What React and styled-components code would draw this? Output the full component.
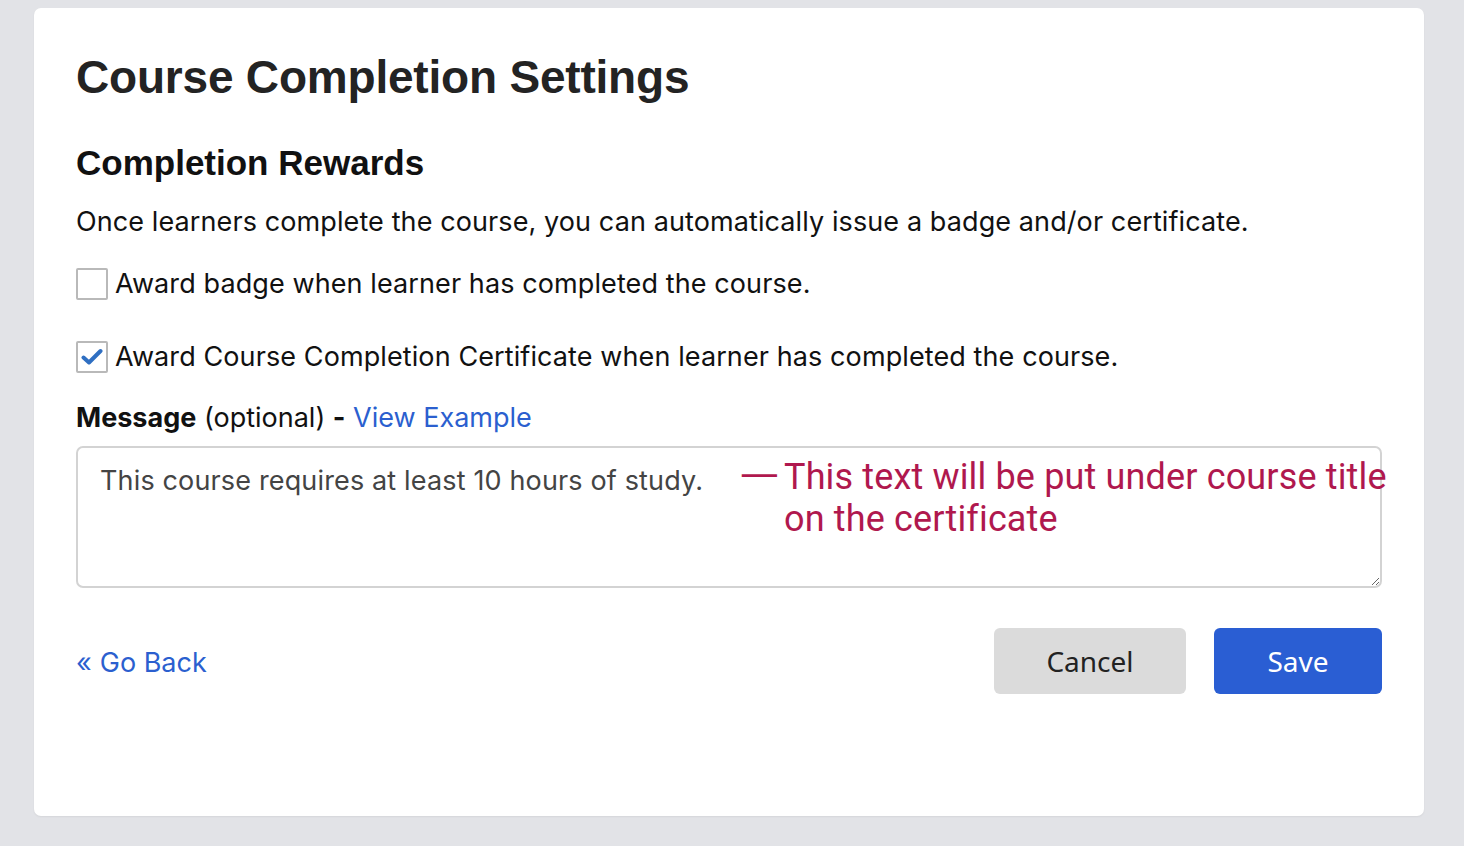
import React from "react";
import styled, { createGlobalStyle } from "styled-components";

const Global = createGlobalStyle`
  html, body { margin: 0; padding: 0; }
  body {
    background: #e2e3e7;
    font-family: Inter, "Noto Sans", sans-serif;
    color: #1d1d1f;
  }
`;

const Page = styled.div`
  padding: 8px 40px 30px 34px;
`;

const Card = styled.section`
  background: #ffffff;
  border-radius: 7px;
  box-shadow: 0 1px 2px rgba(0, 0, 0, 0.06);
  min-height: 808px;
  box-sizing: border-box;
  padding: 41px 42px 40px 42px;
  display: flex;
  flex-direction: column;
`;

const Title = styled.h1`
  margin: 0;
  font-family: "Liberation Sans", Arial, sans-serif;
  font-weight: 700;
  font-size: 46px;
  line-height: 56px;
  color: #232323;
  letter-spacing: -0.2px;
`;

const SectionTitle = styled.h2`
  margin: 37px 0 0 0;
  font-family: "Liberation Sans", Arial, sans-serif;
  font-weight: 700;
  font-size: 35px;
  line-height: 42px;
  color: #111;
`;

const Intro = styled.p`
  margin: 22px 0 0 0;
  font-size: 27px;
  letter-spacing: 0.1px;
  line-height: 32px;
  color: #111;
`;

const CheckRow = styled.label`
  display: flex;
  align-items: center;
  gap: 7px;
  margin-top: ${(p) => p.$gap}px;
  font-size: 27px;
  letter-spacing: 0.1px;
  line-height: 32px;
  color: #111;
`;

const Box = styled.span`
  width: 32px;
  height: 32px;
  box-sizing: border-box;
  border: 2px solid #b9b9b9;
  border-radius: 2px;
  background: #fff;
  display: flex;
  align-items: center;
  justify-content: center;
  flex: none;
`;

const Label = styled.div`
  margin-top: 29px;
  font-size: 27px;
  line-height: 32px;
  color: #111;
`;

const Strong = styled.strong`
  font-weight: 700;
`;

const Link = styled.a`
  color: #2b5fcf;
  text-decoration: none;
  cursor: pointer;
`;

const FieldWrap = styled.div`
  position: relative;
  margin-top: 12px;
`;

const TextArea = styled.textarea`
  display: block;
  width: 100%;
  height: 142px;
  box-sizing: border-box;
  border: 2px solid #d3d3d3;
  border-radius: 7px;
  padding: 17px 22px;
  font-family: Inter, "Noto Sans", sans-serif;
  font-size: 27px;
  letter-spacing: 0.15px;
  line-height: 32px;
  color: #444;
  resize: vertical;
  outline: none;
`;

const Note = styled.div`
  position: absolute;
  left: 662px;
  top: 10px;
  display: flex;
  gap: 12px;
  font-family: Roboto, "Noto Sans", sans-serif;
  font-size: 36px;
  line-height: 42px;
  color: #b0184e;
  pointer-events: none;
`;

const Dash = styled.span`
  flex: none;
  display: inline-block;
  width: 34px;
  transform: scaleX(1.5);
  transform-origin: left center;
`;

const NoteText = styled.span`
  width: 640px;
  letter-spacing: 0.15px;
`;

const Footer = styled.div`
  margin-top: 40px;
  display: flex;
  align-items: center;
  gap: 28px;
`;

const Back = styled(Link)`
  font-size: 27px;
  line-height: 32px;
  margin-right: auto;
  margin-top: 3px;
  display: flex;
  align-items: center;
  gap: 8px;
`;

const Button = styled.button`
  height: 66px;
  width: ${(p) => p.$w}px;
  border: none;
  border-radius: 6px;
  font-family: "Noto Sans", "Open Sans", sans-serif;
  font-size: 28px;
  background: ${(p) => (p.$primary ? "#2a5ed3" : "#dbdbdb")};
  color: ${(p) => (p.$primary ? "#ffffff" : "#222")};
  cursor: pointer;
`;

const Check = () => (
  <svg width="22" height="18" viewBox="0 0 22 18" aria-hidden="true">
    <path
      d="M2.5 9.5 L8 14.5 L19.5 3"
      fill="none"
      stroke="#2f6fc2"
      strokeWidth="4"
      strokeLinecap="round"
      strokeLinejoin="round"
    />
  </svg>
);

export default function App() {
  return (
    <>
      <Global />
      <Page>
        <Card>
          <Title>Course Completion Settings</Title>
          <SectionTitle>Completion Rewards</SectionTitle>
          <Intro>
            Once learners complete the course, you can automatically issue a
            badge and/or certificate.
          </Intro>
          <CheckRow $gap={30}>
            <Box />
            Award badge when learner has completed the course.
          </CheckRow>
          <CheckRow $gap={41}>
            <Box>
              <Check />
            </Box>
            Award Course Completion Certificate when learner has completed the
            course.
          </CheckRow>
          <Label>
            <Strong>Message</Strong> (optional) <Strong>-</Strong>{" "}
            <Link>View Example</Link>
          </Label>
          <FieldWrap>
            <TextArea defaultValue="This course requires at least 10 hours of study." />
            <Note>
              <Dash>—</Dash>
              <NoteText>
                This text will be put under course title on the certificate
              </NoteText>
            </Note>
          </FieldWrap>
          <Footer>
            <Back>
              <span>«</span>
              <span>Go Back</span>
            </Back>
            <Button $w={192}>Cancel</Button>
            <Button $w={168} $primary>
              Save
            </Button>
          </Footer>
        </Card>
      </Page>
    </>
  );
}
